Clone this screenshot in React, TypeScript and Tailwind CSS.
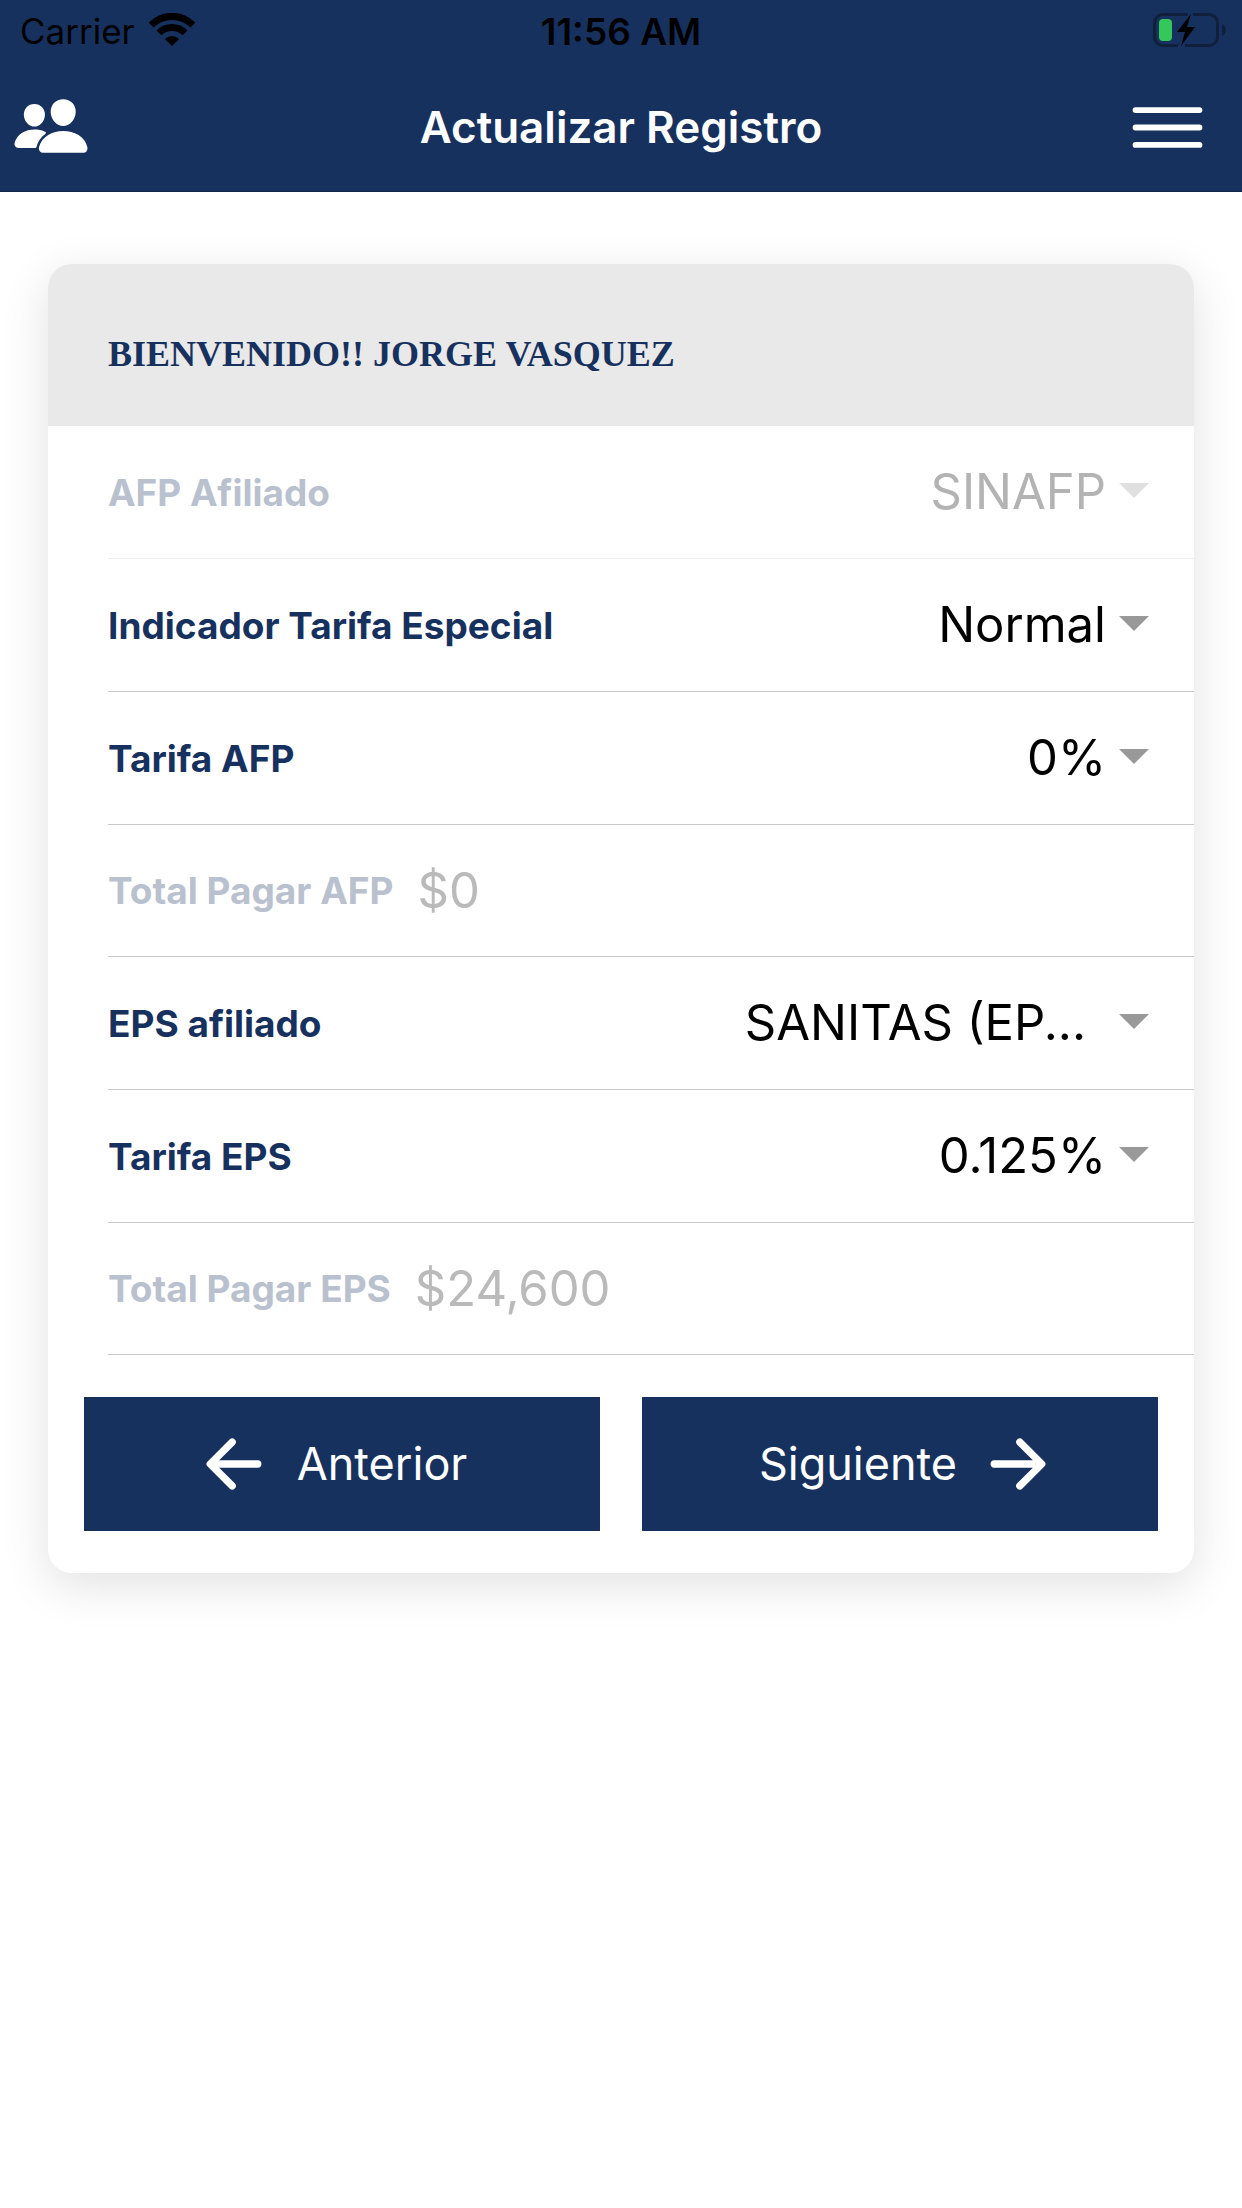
import { IoArrowBack, IoArrowForward, IoMenuOutline, IoPeople } from "react-icons/io5";

type Field = {
  id: string;
  label: string;
  value: string;
  kind: "select" | "total";
  disabled?: boolean;
  truncated?: boolean;
};

const fields: Field[] = [
  { id: "afp", label: "AFP Afiliado", value: "SINAFP", kind: "select", disabled: true },
  { id: "indicador", label: "Indicador Tarifa Especial", value: "Normal", kind: "select" },
  { id: "tarifa-afp", label: "Tarifa AFP", value: "0%", kind: "select" },
  { id: "total-afp", label: "Total Pagar AFP", value: "$0", kind: "total" },
  { id: "eps", label: "EPS afiliado", value: "SANITAS (EP...", kind: "select", truncated: true },
  { id: "tarifa-eps", label: "Tarifa EPS", value: "0.125%", kind: "select" },
  { id: "total-eps", label: "Total Pagar EPS", value: "$24,600", kind: "total" },
];

function WifiIcon() {
  return (
    <svg width="46" height="33" viewBox="0 0 46 33" fill="none" stroke="black" strokeWidth="7" aria-hidden="true">
      <path d="M2.1 12.1a29.5 29.5 0 0 1 41.8 0" />
      <path d="M9.9 19.9a18.5 18.5 0 0 1 26.2 0" />
      <path d="M23 33l-7.1-7.1a10 10 0 0 1 14.2 0Z" fill="black" stroke="none" />
    </svg>
  );
}

function BatteryIcon() {
  return (
    <svg width="74" height="34" viewBox="0 0 74 34" fill="none" aria-hidden="true">
      <path
        d="M25 32.5H10A8.5 8.5 0 0 1 1.5 24V10A8.5 8.5 0 0 1 10 1.5H35M40 1.5H56A8.5 8.5 0 0 1 64.5 10V24A8.5 8.5 0 0 1 56 32.5H32"
        stroke="#0f1f3c"
        strokeWidth="3"
      />
      <path d="M69 11c5 2 5 10 0 12Z" fill="#0f1f3c" />
      <rect x="6" y="6" width="13" height="22" rx="4" fill="#34c759" />
      <path d="M38 1 24 19h8l-4 14 14-19h-8Z" fill="black" />
    </svg>
  );
}

function StatusBar() {
  return (
    <div className="grid h-[63px] grid-cols-[1fr_auto_1fr] items-center px-[15px] text-[35px] leading-none text-black">
      <div className="flex items-center gap-3.5 pl-[5px]">
        <span>Carrier</span>
        <div className="pb-1">
          <WifiIcon />
        </div>
      </div>
      <span className="text-[37px] font-semibold">11:56 AM</span>
      <div className="flex justify-end pb-[3px]">
        <BatteryIcon />
      </div>
    </div>
  );
}

function FieldRow({ field }: { field: Field }) {
  const muted = field.disabled || field.kind === "total";

  return (
    <div
      className={`ml-15 flex items-center border-b ${field.kind === "total" ? "h-[132px]" : "h-[133px]"} ${
        field.disabled ? "border-[#efefef]" : "border-[#c8c8c8]"
      }`}
    >
      <label
        htmlFor={field.id}
        className={`shrink-0 text-[37px] font-bold leading-none ${
          muted ? "text-[#b9c1cf]" : "text-[#17315f]"
        }`}
      >
        {field.label}
      </label>
      {field.kind === "select" ? (
        <div className="relative min-w-0 flex-1">
          <select
            id={field.id}
            disabled={field.disabled}
            className={`w-full appearance-none bg-transparent text-[49px] leading-[60px] [text-align-last:right] disabled:opacity-100 ${
              field.truncated ? "pr-[108px]" : "pr-[88px]"
            } ${field.disabled ? "text-[#b3b3b3]" : "text-black"}`}
          >
            <option>{field.value}</option>
          </select>
          <svg
            width="30"
            height="15"
            viewBox="0 0 30 15"
            className={`pointer-events-none absolute right-[45px] top-[21px] ${
              field.disabled ? "fill-[#e0e0e0]" : "fill-[#999999]"
            }`}
            aria-hidden="true"
          >
            <path d="M0 0h30L15 15Z" />
          </svg>
        </div>
      ) : (
        <input
          id={field.id}
          type="text"
          value={field.value}
          disabled
          readOnly
          className="ml-6 min-w-0 flex-1 bg-transparent text-[49px] leading-[60px] text-[#bababa]"
        />
      )}
    </div>
  );
}

export default function App() {
  return (
    <div className="min-h-screen bg-white font-[Inter,sans-serif]">
      <header className="border-b border-[#122548] bg-[#17315f] text-white">
        <StatusBar />
        <div className="grid h-32 grid-cols-[1fr_auto_1fr] items-center px-3">
          <button type="button" aria-label="Afiliados" className="justify-self-start pb-0.5">
            <IoPeople size={78} />
          </button>
          <h1 className="text-[44px] font-semibold leading-none">Actualizar Registro</h1>
          <button type="button" aria-label="Menú" className="mr-4 justify-self-end">
            <IoMenuOutline size={93} />
          </button>
        </div>
      </header>

      <main className="px-12 pt-[72px]">
        <form className="overflow-hidden rounded-3xl bg-white shadow-[0_12px_48px_rgba(0,0,0,0.12)]">
          <div className="flex h-[162px] items-center bg-[#e9e9e9] px-15 pt-[18px]">
            <h2 className="font-['Liberation_Serif',serif] text-[36px] font-bold leading-none text-[#17315f]">
              BIENVENIDO!! JORGE VASQUEZ
            </h2>
          </div>

          {fields.map((field) => (
            <FieldRow key={field.id} field={field} />
          ))}

          <div className="grid grid-cols-2 gap-[42px] px-9 py-[42px]">
            <button
              type="button"
              className="flex h-[134px] items-center justify-center gap-6 bg-[#17315f] pr-[22px] text-[45px] text-white"
            >
              <IoArrowBack size={78} />
              Anterior
            </button>
            <button
              type="button"
              className="flex h-[134px] items-center justify-center gap-[22px] bg-[#17315f] pl-4 text-[45px] text-white"
            >
              Siguiente
              <IoArrowForward size={78} />
            </button>
          </div>
        </form>
      </main>
    </div>
  );
}
